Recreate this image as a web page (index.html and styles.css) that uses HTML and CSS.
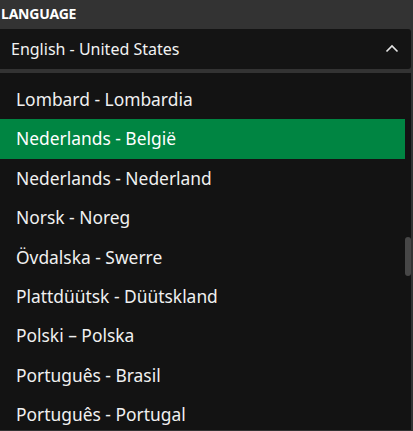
FILE: index.html
```html
<!DOCTYPE html>
<html>
<head>
<meta charset="utf-8">
<link rel="stylesheet" href="styles.css">
</head>
<body>
<div class="panel">
  <div class="label">LANGUAGE</div>
  <div class="select">
    <span class="value">English - United States</span>
    <svg class="chev" width="14" height="9" viewBox="0 0 14 9"><path d="M1.5 7.5 L7 2 L12.5 7.5" fill="none" stroke="#e6e6e6" stroke-width="1.6"/></svg>
  </div>
  <div class="dropdown">
    <ul class="options">
      <li>Lombard - Lombardia</li>
      <li class="active">Nederlands - België</li>
      <li>Nederlands - Nederland</li>
      <li>Norsk - Noreg</li>
      <li>Övdalska - Swerre</li>
      <li>Plattdüütsk - Düütskland</li>
      <li>Polski – Polska</li>
      <li>Português - Brasil</li>
      <li>Português - Portugal</li>
    </ul>
    <div class="track"><div class="thumb"></div></div>
  </div>
</div>
</body>
</html>
```
FILE: styles.css
```css
html, body {
  margin: 0;
  padding: 0;
  background: #333333;
  overflow: hidden;
}
body {
  font-family: "Noto Sans", "Open Sans", sans-serif;
  color: #ffffff;
  width: 413px;
  height: 431px;
}
.panel {
  display: flex;
  flex-direction: column;
}
.label {
  font-weight: 700;
  font-size: 14px;
  line-height: 16px;
  padding: 6px 0 7px 1px;
  height: 16px;
  letter-spacing: -0.2px;
}
.select {
  width: 411px;
  height: 40px;
  box-sizing: border-box;
  background: #141414;
  border-radius: 0 3px 3px 0;
  display: flex;
  align-items: center;
  justify-content: space-between;
  padding: 0 12px 0 11px;
}
.value {
  font-size: 16px;
  color: #f2f2f2;
}
.chev {
  display: block;
  margin-top: -1px;
}
.dropdown {
  margin-top: 4px;
  width: 411px;
  height: 357px;
  background: #131313;
  display: flex;
  overflow: hidden;
}
.options {
  list-style: none;
  margin: 0;
  padding: 7px 0 0 0;
  width: 405px;
}
.options li {
  height: 39.4px;
  line-height: 39.4px;
  padding-left: 16px;
  font-size: 17.4px;
  color: #f0f0f0;
  white-space: nowrap;
}
.options li.active {
  background: #008542;
  color: #ffffff;
}
.track {
  width: 6px;
  position: relative;
}
.thumb {
  margin-top: 164px;
  width: 6px;
  height: 39px;
  background: #474747;
  border-radius: 3px;
}
```
